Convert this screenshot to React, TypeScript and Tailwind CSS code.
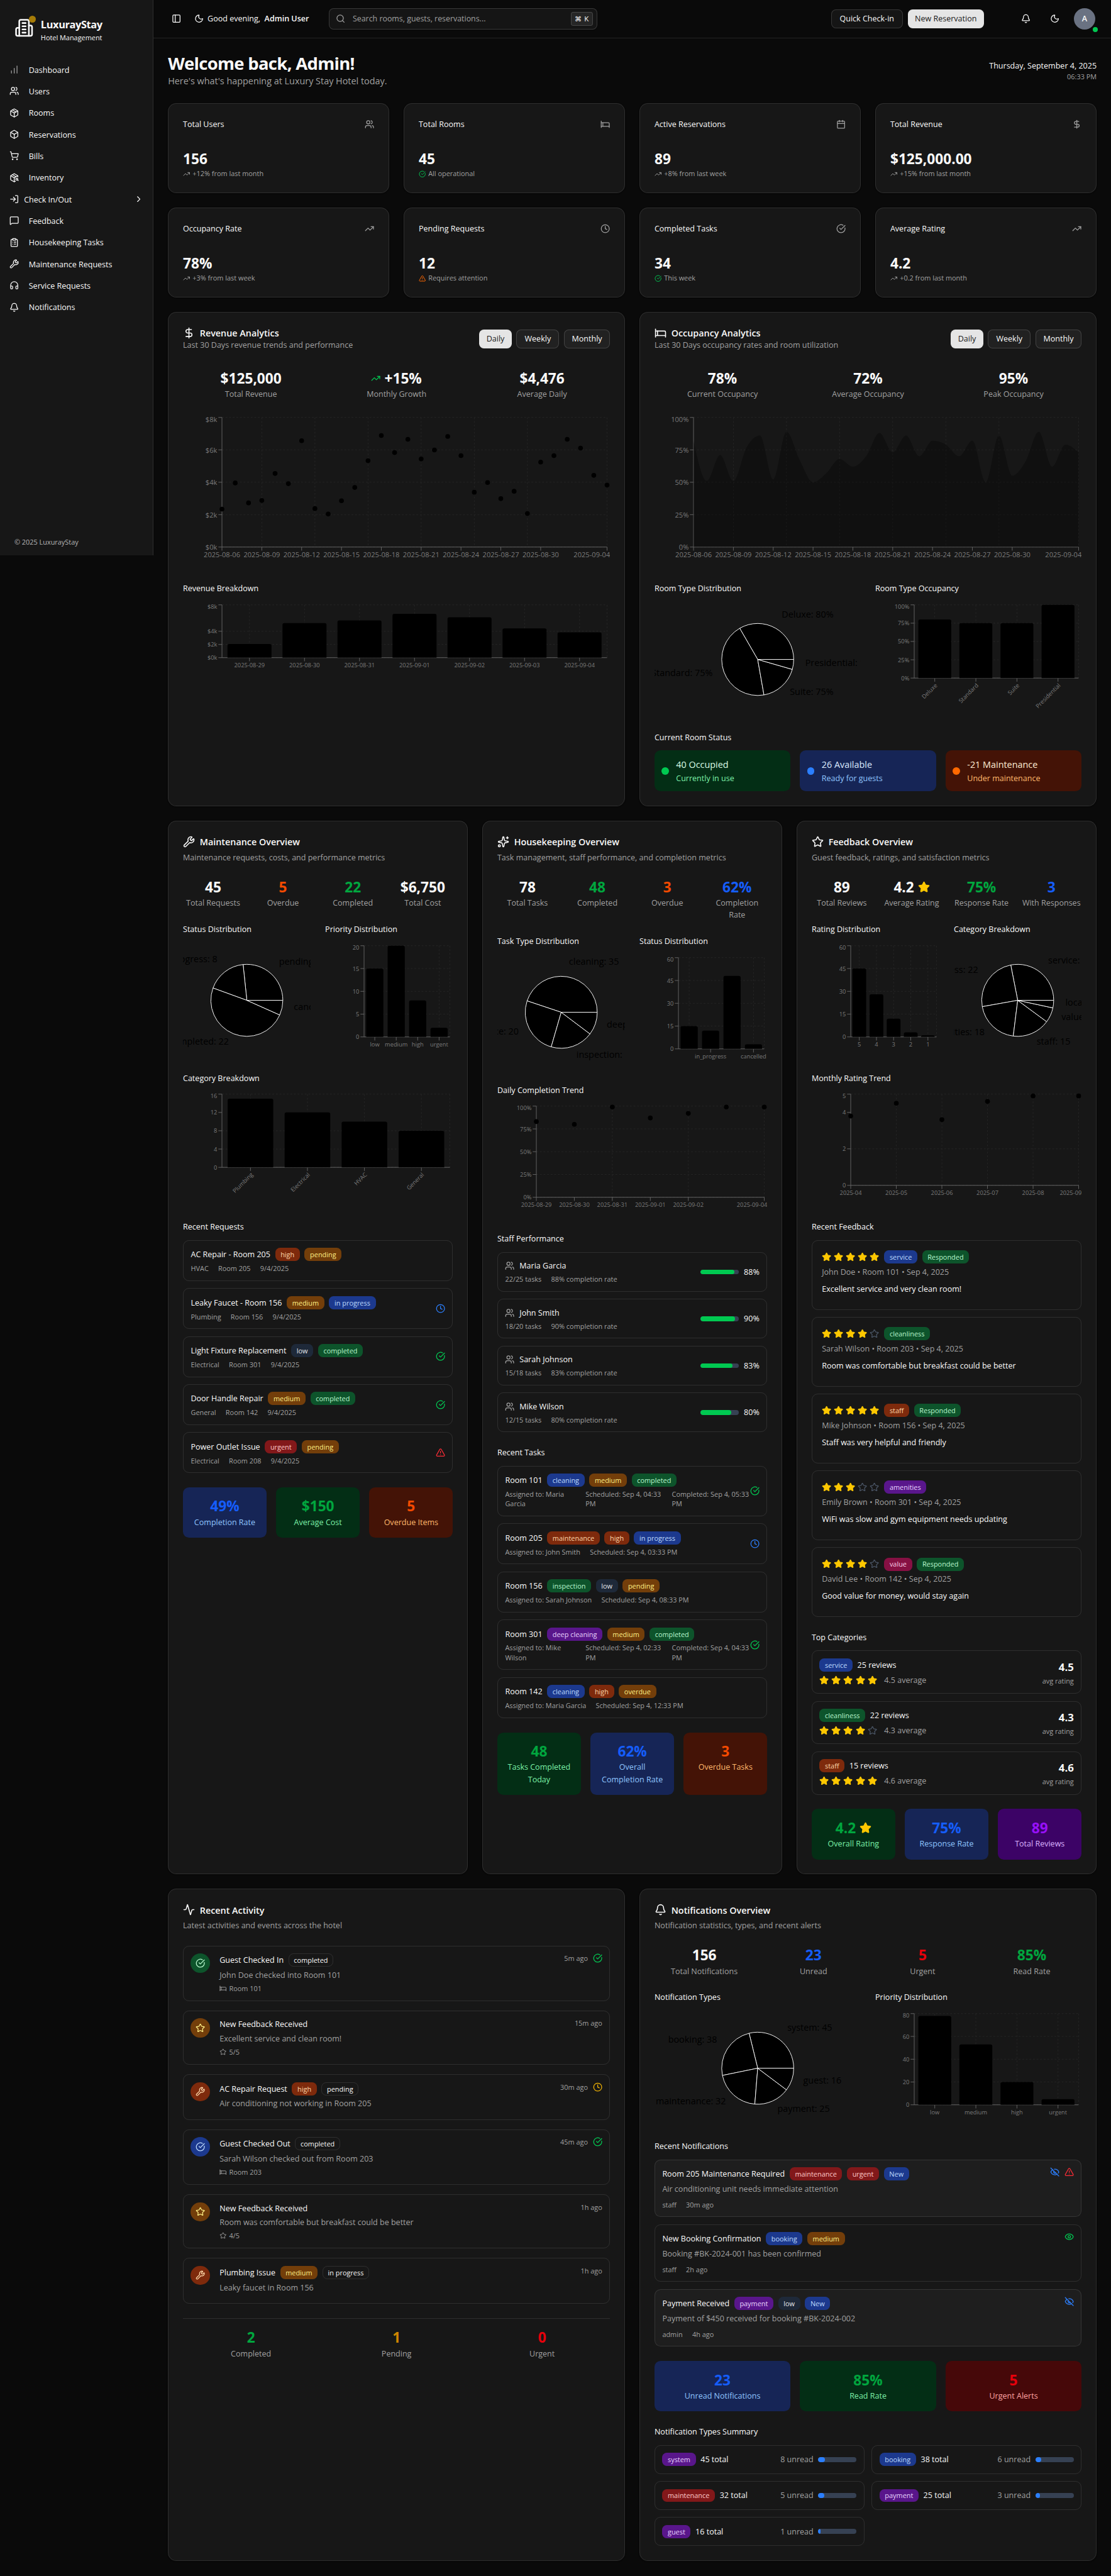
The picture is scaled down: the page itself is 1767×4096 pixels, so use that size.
import React from "react";
import {
  Activity,
  Bed,
  Bell,
  Box,
  Calendar,
  ChartNoAxesColumnIncreasing,
  ChevronRight,
  CircleCheckBig,
  ClipboardList,
  Clock,
  DollarSign,
  Eye,
  EyeOff,
  Headphones,
  LogIn,
  MessageSquare,
  Moon,
  Package,
  PackageSearch,
  PanelLeft,
  Search,
  ShoppingCart,
  Sparkles,
  Star,
  TrendingUp,
  TriangleAlert,
  Users,
  Wrench,
} from "lucide-react";

type Icon = React.ComponentType<{ className?: string; strokeWidth?: number }>;

/* ---------- type scale ---------- */

const T = {
  xs: "text-[11.45px] leading-4",
  sm: "text-[13.15px] leading-5",
  base: "text-[15.1px] leading-6",
  stat: "text-[23.8px] leading-8 font-bold",
};

/* ---------- badges ---------- */

const TONES: Record<string, string> = {
  orange: "border-transparent bg-orange-900 text-orange-200",
  yellow: "border-transparent bg-yellow-900 text-yellow-200",
  blue: "border-transparent bg-blue-900 text-blue-200",
  gray: "border-transparent bg-gray-800 text-gray-200",
  green: "border-transparent bg-green-900 text-green-200",
  red: "border-transparent bg-red-900 text-red-200",
  purple: "border-transparent bg-purple-900 text-purple-200",
  pink: "border-transparent bg-pink-900 text-pink-200",
  outline: "border-white/10 text-neutral-50",
};

type BadgeDef = [string, keyof typeof TONES];

function Badge({ def }: { def: BadgeDef }) {
  return (
    <span
      className={`inline-flex h-[22px] shrink-0 items-center rounded-lg border px-2 text-[11.45px] leading-4 whitespace-nowrap ${TONES[def[1]]}`}
    >
      {def[0]}
    </span>
  );
}

/* ---------- charts ---------- */

type Tick = { at: number; label?: string; end?: boolean; rotate?: boolean };

type PlotProps = {
  w: number;
  h: number;
  axisH?: number;
  max: number;
  yTicks: [number, string][];
  hGrid?: number[];
  xTicks: Tick[];
  vGrid: number[];
  font?: number;
  children: (box: { left: number; right: number; top: number; bottom: number; y: (v: number) => number }) => React.ReactNode;
};

function Plot({ w, h, axisH = 30, max, yTicks, hGrid, xTicks, vGrid, font = 9.75, children }: PlotProps) {
  const left = 65;
  const right = w - 5;
  const top = 5;
  const bottom = h - 5 - axisH;
  const y = (v: number) => bottom - (v / max) * (bottom - top);
  const x = (f: number) => left + f * (right - left);
  return (
    <svg width={w} height={h} viewBox={`0 0 ${w} ${h}`} className="block overflow-hidden" fontSize={font}>
      <g stroke="#262626" strokeDasharray="3 3">
        {(hGrid ?? yTicks.map((t) => t[0])).map((v) => (
          <line key={v} x1={left} x2={right} y1={y(v)} y2={y(v)} />
        ))}
        {vGrid.map((f) => (
          <line key={f} x1={x(f)} x2={x(f)} y1={top} y2={bottom} />
        ))}
      </g>
      <g stroke="#666">
        <line x1={left} x2={right} y1={bottom} y2={bottom} />
        <line x1={left} x2={left} y1={top} y2={bottom} />
        {yTicks.map(([v]) => (
          <line key={v} x1={left - 6} x2={left} y1={y(v)} y2={y(v)} />
        ))}
        {xTicks.map((t) => (
          <line key={t.at} x1={x(t.at)} x2={x(t.at)} y1={bottom} y2={bottom + 6} />
        ))}
      </g>
      {children({ left, right, top, bottom, y })}
      <g fill="#7a7a7a">
        {yTicks.map(([v, label]) => (
          <text key={v} x={left - 8} y={y(v) + (v === max ? font * 0.3 : 0)} dy="0.38em" textAnchor="end">
            {label}
          </text>
        ))}
        {xTicks.map((t) =>
          t.rotate ? (
            <text
              key={t.at}
              transform={`translate(${x(t.at)} ${bottom + 8}) rotate(-45)`}
              dy="0.71em"
              textAnchor="end"
            >
              {t.label}
            </text>
          ) : (
            <text key={t.at} x={t.end ? w : x(t.at)} y={bottom + 8} dy="0.8em" textAnchor={t.end ? "end" : "middle"}>
              {t.label}
            </text>
          ),
        )}
      </g>
    </svg>
  );
}

type BarsProps = Omit<PlotProps, "children" | "xTicks" | "vGrid"> & {
  values: number[];
  labels: (string | null)[];
  rotate?: boolean;
  grid?: number[];
};

function BarPlot({ values, labels, rotate, grid, ...rest }: BarsProps) {
  const n = values.length;
  const center = (i: number) => (i + 0.5) / n;
  const bars = grid ?? values.map((_, i) => i);
  return (
    <Plot
      {...rest}
      xTicks={labels.flatMap((label, i) => (label ? [{ at: center(i), label, rotate }] : []))}
      vGrid={[...bars.map(center), 1]}
    >
      {({ left, right, bottom, y }) => {
        const band = (right - left) / n;
        return values.map((v, i) => {
          const x0 = left + band * (i + 0.1);
          const x1 = x0 + band * 0.8;
          const t = y(v);
          const r = Math.min(3, bottom - t);
          return (
            <path
              key={i}
              d={`M${x0} ${bottom}V${t + r}Q${x0} ${t} ${x0 + r} ${t}H${x1 - r}Q${x1} ${t} ${x1} ${t + r}V${bottom}Z`}
              fill="#000"
            />
          );
        });
      }}
    </Plot>
  );
}

type DotsProps = Omit<PlotProps, "children"> & { values: number[] };

function DotPlot({ values, ...rest }: DotsProps) {
  return (
    <Plot {...rest}>
      {({ left, right, y }) =>
        values.map((v, i) => (
          <circle key={i} cx={left + ((right - left) * i) / (values.length - 1)} cy={y(v)} r={4} fill="#000" />
        ))
      }
    </Plot>
  );
}

function monotonePath(pts: [number, number][]) {
  const n = pts.length;
  const slope = (i: number) => (pts[i + 1][1] - pts[i][1]) / (pts[i + 1][0] - pts[i][0]);
  const m: number[] = [];
  for (let i = 1; i < n - 1; i++) {
    const s0 = slope(i - 1);
    const s1 = slope(i);
    const p = (s0 + s1) / 2;
    m[i] = (Math.sign(s0) + Math.sign(s1)) * Math.min(Math.abs(s0), Math.abs(s1), 0.5 * Math.abs(p)) || 0;
  }
  m[0] = (3 * slope(0) - m[1]) / 2;
  m[n - 1] = (3 * slope(n - 2) - m[n - 2]) / 2;
  let d = `M${pts[0][0]} ${pts[0][1]}`;
  for (let i = 0; i < n - 1; i++) {
    const dx = (pts[i + 1][0] - pts[i][0]) / 3;
    d += `C${pts[i][0] + dx} ${pts[i][1] + dx * m[i]} ${pts[i + 1][0] - dx} ${pts[i + 1][1] - dx * m[i + 1]} ${pts[i + 1][0]} ${pts[i + 1][1]}`;
  }
  return d;
}

function PieChart({ w, slices }: { w: number; slices: [number, string][] }) {
  const total = slices.reduce((a, s) => a + s[0], 0);
  const cx = w / 2;
  const cy = 96;
  const at = (deg: number, r: number): [number, number] => [
    cx + r * Math.cos((deg * Math.PI) / 180),
    cy - r * Math.sin((deg * Math.PI) / 180),
  ];
  let start = 0;
  return (
    <svg width={w} height={192} viewBox={`0 0 ${w} 192`} className="block overflow-hidden" fontSize={15.1}>
      {slices.map(([v, label]) => {
        const a0 = start;
        const a1 = start + (v / total) * 360;
        start = a1;
        const [x0, y0] = at(a0, 60);
        const [x1, y1] = at(a1, 60);
        const [lx, ly] = at((a0 + a1) / 2, 80);
        return (
          <g key={label}>
            <path
              d={`M${cx} ${cy}L${x0} ${y0}A60 60 0 ${a1 - a0 > 180 ? 1 : 0} 0 ${x1} ${y1}Z`}
              fill="#000"
              stroke="#fff"
              strokeWidth={1}
            />
            <text x={lx} y={ly} fill="#000" textAnchor={lx > cx ? "start" : "end"}>
              {label}
            </text>
          </g>
        );
      })}
    </svg>
  );
}

/* ---------- shared pieces ---------- */

function Card({ className = "", children }: { className?: string; children: React.ReactNode }) {
  return (
    <div className={`rounded-[14px] border border-white/10 bg-neutral-900 p-6 shadow-sm ${className}`}>{children}</div>
  );
}

function CardTitle({ icon: I, title }: { icon: Icon; title: string }) {
  return (
    <div className="flex h-5 items-center gap-2">
      <I className="h-5 w-5 text-neutral-50" />
      <span className="pt-px text-[15.05px] leading-4 font-semibold text-neutral-50">{title}</span>
    </div>
  );
}

function CardHead({ icon, title, text }: { icon: Icon; title: string; text: string }) {
  return (
    <div className="mb-6 flex flex-col gap-1.5">
      <CardTitle icon={icon} title={title} />
      <p className={`${T.sm} text-[#a1a1a1]`}>{text}</p>
    </div>
  );
}

function Section({ title, className = "", children }: { title: string; className?: string; children: React.ReactNode }) {
  return (
    <div className={className}>
      <h4 className="mb-[11px] text-[13.15px] leading-[21px] text-neutral-50">{title}</h4>
      {children}
    </div>
  );
}

type StatDef = { value: React.ReactNode; label: React.ReactNode; tone?: string };

function Stats({ items, cols }: { items: StatDef[]; cols: string }) {
  return (
    <div className={`grid gap-4 ${cols}`}>
      {items.map((s, i) => (
        <div key={i} className="text-center">
          <div className={`flex items-center justify-center gap-1.5 ${T.stat} ${s.tone ?? "text-neutral-50"}`}>
            {s.value}
          </div>
          <div className={`whitespace-nowrap text-[#a1a1a1] ${T.sm}`}>{s.label}</div>
        </div>
      ))}
    </div>
  );
}

const TILE: Record<string, [string, string, string]> = {
  blue: ["bg-blue-950", "text-blue-600", "text-blue-300"],
  green: ["bg-green-950", "text-green-600", "text-green-300"],
  orange: ["bg-orange-950", "text-orange-600", "text-orange-300"],
  purple: ["bg-purple-950", "text-purple-600", "text-purple-300"],
  red: ["bg-red-950", "text-red-600", "text-red-300"],
};

function Tiles({ items }: { items: [keyof typeof TILE, React.ReactNode, React.ReactNode][] }) {
  return (
    <div className="grid grid-cols-3 gap-4">
      {items.map(([tone, value, label], i) => (
        <div key={i} className={`rounded-[10px] p-4 text-center ${TILE[tone][0]}`}>
          <div className={`flex items-center justify-center gap-1.5 ${T.stat} ${TILE[tone][1]}`}>{value}</div>
          <div className={`whitespace-nowrap ${T.sm} ${TILE[tone][2]}`}>{label}</div>
        </div>
      ))}
    </div>
  );
}

function StatusIcon({ kind }: { kind: "clock" | "check" | "alert" | "pending" | "hidden" | "seen" }) {
  if (kind === "clock") return <Clock className="h-4 w-4 shrink-0 text-blue-500" />;
  if (kind === "pending") return <Clock className="h-4 w-4 shrink-0 text-yellow-500" />;
  if (kind === "check") return <CircleCheckBig className="h-4 w-4 shrink-0 text-green-500" />;
  if (kind === "alert") return <TriangleAlert className="h-4 w-4 shrink-0 text-red-500" />;
  if (kind === "hidden") return <EyeOff className="h-4 w-4 shrink-0 text-blue-500" />;
  return <Eye className="h-4 w-4 shrink-0 text-green-500" />;
}

function Stars({ n }: { n: number }) {
  return (
    <div className="flex gap-1">
      {[1, 2, 3, 4, 5].map((i) => (
        <Star key={i} className={i <= n ? "h-4 w-4 fill-yellow-400 text-yellow-400" : "h-4 w-4 text-gray-600"} />
      ))}
    </div>
  );
}

/* ---------- sidebar ---------- */

const NAV: [string, Icon][] = [
  ["Dashboard", ChartNoAxesColumnIncreasing],
  ["Users", Users],
  ["Rooms", Package],
  ["Reservations", Box],
  ["Bills", ShoppingCart],
  ["Inventory", PackageSearch],
  ["Check In/Out", LogIn],
  ["Feedback", MessageSquare],
  ["Housekeeping Tasks", ClipboardList],
  ["Maintenance Requests", Wrench],
  ["Service Requests", Headphones],
  ["Notifications", Bell],
];

function Sidebar() {
  return (
    <aside className="flex h-[926px] w-64 shrink-0 flex-col border-r border-white/10 bg-neutral-900 text-neutral-50">
      <div className="flex h-[100px] items-start gap-3 pt-[30px] pl-6">
        <div className="relative h-8 w-8">
          <svg viewBox="0 0 24 24" className="h-8 w-8" fill="none" stroke="currentColor" strokeWidth="2" strokeLinecap="round" strokeLinejoin="round">
            <path d="M6 22V4a2 2 0 0 1 2-2h8a2 2 0 0 1 2 2v18Z" />
            <path d="M6 12H4a2 2 0 0 0-2 2v6a2 2 0 0 0 2 2h2" />
            <path d="M18 9h2a2 2 0 0 1 2 2v9a2 2 0 0 1-2 2h-2" />
            <path d="M10 6h4M10 10h4M10 14h4M10 18h4" />
          </svg>
          <span className="absolute -top-1 -right-1 h-3 w-3 rounded-full bg-[#a67c08]" />
        </div>
        <div>
          <div className="text-[17.2px] leading-5 font-bold tracking-tight">LuxurayStay</div>
          <div className="mt-1 text-[11.45px] leading-4">Hotel Management</div>
        </div>
      </div>
      <nav className="flex flex-col gap-1 px-2">
        {NAV.map(([label, I]) => {
          const sub = label === "Check In/Out";
          return (
            <div key={label} className={`flex h-8 items-center px-2 ${T.sm} ${sub ? "gap-2" : "gap-4"}`}>
              <I className={label === "Dashboard" ? "h-4 w-4 text-neutral-400" : "h-4 w-4"} />
              <span className="pt-px">{label}</span>
              {sub && <ChevronRight className="ml-auto h-4 w-4" />}
            </div>
          );
        })}
      </nav>
      <div className={`mt-auto mb-[15px] pl-6 text-neutral-50/70 ${T.xs}`}>© 2025 LuxurayStay</div>
    </aside>
  );
}

/* ---------- header ---------- */

function Header() {
  return (
    <header className={`flex h-16 items-center border-b border-white/10 px-6 text-neutral-50 ${T.sm}`}>
      <div className="flex h-7 w-7 items-center justify-center">
        <PanelLeft className="h-4 w-4" />
      </div>
      <div className="ml-4 flex w-48 items-center gap-1.5 whitespace-nowrap">
        <Moon className="h-4 w-4" />
        <span>
          Good evening,&nbsp; <span className="font-semibold">Admin User</span>
        </span>
      </div>
      <div className="ml-8 flex h-9 w-[448px] items-center rounded-lg border border-white/15 bg-[#151515] pr-[7px] pl-[11px] shadow-xs">
        <Search className="h-4 w-4 text-[#a1a1a1]" />
        <span className="ml-3 text-[13px] text-[#a1a1a1]">Search rooms, guests, reservations...</span>
        <span className="ml-auto flex h-6 w-9 items-center justify-center gap-1 rounded border border-white/15 bg-neutral-800 text-xs">
          <span>⌘</span>
          <span>K</span>
        </span>
      </div>
      <div className="ml-auto flex items-center">
        <span className="flex h-8 w-[120px] items-center justify-center rounded-lg border border-white/15 bg-[#151515]">
          Quick Check-in
        </span>
        <span className="ml-2 flex h-8 w-[127px] items-center justify-center rounded-lg bg-neutral-200 text-neutral-900">
          New Reservation
        </span>
        <span className="ml-[52px] flex h-9 w-9 items-center justify-center">
          <Bell className="h-4 w-4" />
        </span>
        <span className="ml-3 flex h-9 w-9 items-center justify-center">
          <Moon className="h-4 w-4" />
        </span>
        <span className="relative mr-0.5 ml-3.5 flex h-9 w-9 items-center justify-center rounded-full bg-gray-500 font-semibold">
          A
          <span className="absolute -right-1 -bottom-1 h-2 w-2 rounded-full bg-green-500" />
        </span>
      </div>
    </header>
  );
}

/* ---------- metric cards ---------- */

type Metric = { title: string; icon: Icon; value: string; note: string; mark: Icon; markTone: string };

const METRICS: Metric[] = [
  { title: "Total Users", icon: Users, value: "156", note: "+12% from last month", mark: TrendingUp, markTone: "" },
  { title: "Total Rooms", icon: Bed, value: "45", note: "All operational", mark: CircleCheckBig, markTone: "text-green-500" },
  { title: "Active Reservations", icon: Calendar, value: "89", note: "+8% from last week", mark: TrendingUp, markTone: "" },
  { title: "Total Revenue", icon: DollarSign, value: "$125,000.00", note: "+15% from last month", mark: TrendingUp, markTone: "" },
  { title: "Occupancy Rate", icon: TrendingUp, value: "78%", note: "+3% from last week", mark: TrendingUp, markTone: "" },
  { title: "Pending Requests", icon: Clock, value: "12", note: "Requires attention", mark: TriangleAlert, markTone: "text-orange-500" },
  { title: "Completed Tasks", icon: CircleCheckBig, value: "34", note: "This week", mark: CircleCheckBig, markTone: "text-green-500" },
  { title: "Average Rating", icon: TrendingUp, value: "4.2", note: "+0.2 from last month", mark: TrendingUp, markTone: "" },
];

function MetricCard({ m }: { m: Metric }) {
  return (
    <Card className="h-[150px]">
      <div className="mb-8 flex h-5 items-center justify-between">
        <span className={`pt-px text-neutral-50 ${T.sm}`}>{m.title}</span>
        <m.icon className="h-4 w-4 text-[#a1a1a1]" />
      </div>
      <div className={`text-neutral-50 ${T.stat}`}>{m.value}</div>
      <p className={`text-[#a1a1a1] ${T.xs}`}>
        <m.mark className={`mr-1 inline h-3 w-3 ${m.markTone}`} />
        {m.note}
      </p>
    </Card>
  );
}

/* ---------- analytics ---------- */

function RangeButtons() {
  return (
    <div className={`flex gap-2 text-neutral-50 ${T.sm}`}>
      <span className="flex h-8 w-[54px] items-center justify-center rounded-lg bg-neutral-200 text-neutral-900">Daily</span>
      <span className="flex h-8 w-[71px] items-center justify-center rounded-lg border border-white/15 bg-[#212121]">Weekly</span>
      <span className="flex h-8 w-[77px] items-center justify-center rounded-lg border border-white/15 bg-[#212121]">Monthly</span>
    </div>
  );
}

function AnalyticsHead({ icon, title, text }: { icon: Icon; title: string; text: string }) {
  return (
    <div className="mb-[30px] flex h-10 items-center justify-between">
      <div>
        <CardTitle icon={icon} title={title} />
        <p className={`${T.sm} text-[#a1a1a1]`}>{text}</p>
      </div>
      <RangeButtons />
    </div>
  );
}

const DAY_TICKS: Tick[] = [
  ["2025-08-06", 0],
  ["2025-08-09", 3],
  ["2025-08-12", 6],
  ["2025-08-15", 9],
  ["2025-08-18", 12],
  ["2025-08-21", 15],
  ["2025-08-24", 18],
  ["2025-08-27", 21],
  ["2025-08-30", 24],
  ["2025-09-04", 29],
].map(([label, d]) => ({ at: (d as number) / 29, label: label as string, end: d === 29 }));

const DAY_GRID = [3, 7, 11, 15, 19, 23, 29].map((d) => d / 29);

const REVENUE = [
  2344, 3956, 2725, 2872, 4542, 3912, 6564, 2374, 2037, 2857, 3678, 5333, 6886, 5832, 6652, 5436, 5993, 6828, 5641, 3385,
  3985, 2989, 3443, 2066, 5245, 5641, 6652, 6110, 4425, 3824,
];

const OCCUPANCY = [
  82, 51, 71, 51, 77, 86, 52, 89, 67, 50, 57, 68, 62, 70, 88, 73, 86, 70, 82, 79, 70, 82, 50, 86, 55, 66, 89, 62, 79, 73,
];

function RevenueCard() {
  return (
    <Card>
      <AnalyticsHead icon={DollarSign} title="Revenue Analytics" text="Last 30 Days revenue trends and performance" />
      <div className="flex flex-col gap-6">
        <Stats
          cols="grid-cols-3"
          items={[
            { value: "$125,000", label: "Total Revenue" },
            { value: <><TrendingUp className="h-4 w-4 text-green-500" />+15%</>, label: "Monthly Growth" },
            { value: "$4,476", label: "Average Daily" },
          ]}
        />
        <DotPlot
          w={712}
          h={256}
          max={8000}
          font={11.65}
          yTicks={[[0, "$0k"], [2000, "$2k"], [4000, "$4k"], [6000, "$6k"], [8000, "$8k"]]}
          xTicks={DAY_TICKS}
          vGrid={DAY_GRID}
          values={REVENUE}
        />
        <Section title="Revenue Breakdown">
          <BarPlot
            w={712}
            h={128}
            max={8000}
            yTicks={[[0, "$0k"], [2000, "$2k"], [4000, "$4k"], [8000, "$8k"]]}
            values={REVENUE.slice(-7)}
            labels={["2025-08-29", "2025-08-30", "2025-08-31", "2025-09-01", "2025-09-02", "2025-09-03", "2025-09-04"]}
          />
        </Section>
      </div>
    </Card>
  );
}

const PERCENT_TICKS: [number, string][] = [
  [0, "0%"],
  [25, "25%"],
  [50, "50%"],
  [75, "75%"],
  [100, "100%"],
];

const ROOM_STATUS: [string, string, string, string, string, string][] = [
  ["40 Occupied", "Currently in use", "bg-green-950", "bg-green-500", "text-green-100", "text-green-300"],
  ["26 Available", "Ready for guests", "bg-blue-950", "bg-blue-500", "text-blue-100", "text-blue-300"],
  ["-21 Maintenance", "Under maintenance", "bg-orange-950", "bg-orange-500", "text-orange-100", "text-orange-300"],
];

function OccupancyCard() {
  return (
    <Card>
      <AnalyticsHead icon={Bed} title="Occupancy Analytics" text="Last 30 Days occupancy rates and room utilization" />
      <div className="flex flex-col gap-6">
        <Stats
          cols="grid-cols-3"
          items={[
            { value: "78%", label: "Current Occupancy" },
            { value: "72%", label: "Average Occupancy" },
            { value: "95%", label: "Peak Occupancy" },
          ]}
        />
        <Plot w={712} h={256} max={100} font={11.65} yTicks={PERCENT_TICKS} xTicks={DAY_TICKS} vGrid={DAY_GRID}>
          {({ left, right, bottom, y }) => {
            const pts = OCCUPANCY.map((v, i): [number, number] => [left + ((right - left) * i) / 29, y(v)]);
            return <path d={`${monotonePath(pts)}V${bottom}H${left}Z`} fill="#000" fillOpacity={0.3} />;
          }}
        </Plot>
        <div className="grid grid-cols-2 gap-6">
          <Section title="Room Type Distribution">
            <PieChart w={344} slices={[[15, "Deluxe: 80%"], [20, "Standard: 75%"], [8, "Suite: 75%"], [2, "Presidential: 100%"]]} />
          </Section>
          <Section title="Room Type Occupancy">
            <BarPlot
              w={344}
              h={192}
              axisH={60}
              max={100}
              rotate
              yTicks={PERCENT_TICKS}
              values={[80, 75, 75, 100]}
              labels={["Deluxe", "Standard", "Suite", "Presidential"]}
            />
          </Section>
        </div>
        <Section title="Current Room Status">
          <div className="grid grid-cols-3 gap-4">
            {ROOM_STATUS.map(([title, sub, bg, dot, c1, c2]) => (
              <div key={title} className={`flex items-center gap-3 rounded-[10px] p-3 ${bg}`}>
                <span className={`h-3 w-3 rounded-full ${dot}`} />
                <div>
                  <div className={`${T.base} ${c1}`}>{title}</div>
                  <div className={`${T.sm} ${c2}`}>{sub}</div>
                </div>
              </div>
            ))}
          </div>
        </Section>
      </div>
    </Card>
  );
}

/* ---------- maintenance ---------- */

const REQUESTS: { title: string; badges: BadgeDef[]; meta: string[]; icon?: "clock" | "check" | "alert" }[] = [
  { title: "AC Repair - Room 205", badges: [["high", "orange"], ["pending", "yellow"]], meta: ["HVAC", "Room 205", "9/4/2025"] },
  { title: "Leaky Faucet - Room 156", badges: [["medium", "yellow"], ["in progress", "blue"]], meta: ["Plumbing", "Room 156", "9/4/2025"], icon: "clock" },
  { title: "Light Fixture Replacement", badges: [["low", "gray"], ["completed", "green"]], meta: ["Electrical", "Room 301", "9/4/2025"], icon: "check" },
  { title: "Door Handle Repair", badges: [["medium", "yellow"], ["completed", "green"]], meta: ["General", "Room 142", "9/4/2025"], icon: "check" },
  { title: "Power Outlet Issue", badges: [["urgent", "red"], ["pending", "yellow"]], meta: ["Electrical", "Room 208", "9/4/2025"], icon: "alert" },
];

function MaintenanceCard() {
  return (
    <Card>
      <CardHead icon={Wrench} title="Maintenance Overview" text="Maintenance requests, costs, and performance metrics" />
      <div className="flex flex-col gap-6">
        <Stats
          cols="grid-cols-4"
          items={[
            { value: "45", label: "Total Requests" },
            { value: "5", label: "Overdue", tone: "text-orange-600" },
            { value: "22", label: "Completed", tone: "text-green-600" },
            { value: "$6,750", label: "Total Cost" },
          ]}
        />
        <div className="grid grid-cols-2 gap-6">
          <Section title="Status Distribution">
            <PieChart w={213} slices={[[12, "pending: 12"], [8, "in_progress: 8"], [22, "completed: 22"], [3, "cancelled: 3"]]} />
          </Section>
          <Section title="Priority Distribution">
            <BarPlot
              w={213}
              h={192}
              max={20}
              yTicks={[[0, "0"], [5, "5"], [10, "10"], [15, "15"], [20, "20"]]}
              values={[15, 20, 8, 2]}
              grid={[3]}
              labels={["low", "medium", "high", "urgent"]}
            />
          </Section>
        </div>
        <Section title="Category Breakdown">
          <BarPlot
            w={450}
            h={192}
            axisH={60}
            max={16}
            rotate
            yTicks={[[0, "0"], [4, "4"], [8, "8"], [12, "12"], [16, "16"]]}
            hGrid={[0, 4, 8, 16]}
            values={[15, 12, 10, 8]}
            labels={["Plumbing", "Electrical", "HVAC", "General"]}
          />
        </Section>
        <Section title="Recent Requests">
          <div className="flex flex-col gap-3">
            {REQUESTS.map((r) => (
              <div key={r.title} className="flex items-center justify-between rounded-[10px] border border-white/10 p-3">
                <div>
                  <div className="mb-1 flex items-center gap-2">
                    <span className={`text-neutral-50 ${T.sm}`}>{r.title}</span>
                    {r.badges.map((b) => <Badge key={b[0]} def={b} />)}
                  </div>
                  <div className={`flex gap-4 text-[#a1a1a1] ${T.xs}`}>
                    {r.meta.map((t) => <span key={t}>{t}</span>)}
                  </div>
                </div>
                {r.icon && <StatusIcon kind={r.icon} />}
              </div>
            ))}
          </div>
        </Section>
        <Tiles items={[["blue", "49%", "Completion Rate"], ["green", "$150", "Average Cost"], ["orange", "5", "Overdue Items"]]} />
      </div>
    </Card>
  );
}

/* ---------- housekeeping ---------- */

const STAFF: [string, string, number][] = [
  ["Maria Garcia", "22/25 tasks", 88],
  ["John Smith", "18/20 tasks", 90],
  ["Sarah Johnson", "15/18 tasks", 83],
  ["Mike Wilson", "12/15 tasks", 80],
];

const TASKS: { room: string; badges: BadgeDef[]; meta: [string, string?][]; icon?: "clock" | "check" }[] = [
  {
    room: "Room 101",
    badges: [["cleaning", "blue"], ["medium", "yellow"], ["completed", "green"]],
    meta: [["Assigned to: Maria", "Garcia"], ["Scheduled: Sep 4, 04:33", "PM"], ["Completed: Sep 4, 05:33", "PM"]],
    icon: "check",
  },
  {
    room: "Room 205",
    badges: [["maintenance", "orange"], ["high", "orange"], ["in progress", "blue"]],
    meta: [["Assigned to: John Smith"], ["Scheduled: Sep 4, 03:33 PM"]],
    icon: "clock",
  },
  {
    room: "Room 156",
    badges: [["inspection", "green"], ["low", "gray"], ["pending", "yellow"]],
    meta: [["Assigned to: Sarah Johnson"], ["Scheduled: Sep 4, 08:33 PM"]],
  },
  {
    room: "Room 301",
    badges: [["deep cleaning", "purple"], ["medium", "yellow"], ["completed", "green"]],
    meta: [["Assigned to: Mike", "Wilson"], ["Scheduled: Sep 4, 02:33", "PM"], ["Completed: Sep 4, 04:33", "PM"]],
    icon: "check",
  },
  {
    room: "Room 142",
    badges: [["cleaning", "blue"], ["high", "orange"], ["overdue", "yellow"]],
    meta: [["Assigned to: Maria Garcia"], ["Scheduled: Sep 4, 12:33 PM"]],
  },
];

function HousekeepingCard() {
  return (
    <Card>
      <CardHead icon={Sparkles} title="Housekeeping Overview" text="Task management, staff performance, and completion metrics" />
      <div className="flex flex-col gap-6">
        <Stats
          cols="grid-cols-4"
          items={[
            { value: "78", label: "Total Tasks" },
            { value: "48", label: "Completed", tone: "text-green-600" },
            { value: "3", label: "Overdue", tone: "text-orange-600" },
            { value: "62%", label: <>Completion<br />Rate</>, tone: "text-blue-600" },
          ]}
        />
        <div className="grid grid-cols-2 gap-6">
          <Section title="Task Type Distribution">
            <PieChart w={213} slices={[[35, "cleaning: 35"], [20, "maintenance: 20"], [15, "inspection: 15"], [8, "deep_cleaning: 8"]]} />
          </Section>
          <Section title="Status Distribution">
            <BarPlot
              w={213}
              h={192}
              max={60}
              yTicks={[[0, "0"], [15, "15"], [30, "30"], [45, "45"], [60, "60"]]}
              values={[15, 12, 48, 3]}
              grid={[0, 3]}
              labels={[null, "in_progress", null, "cancelled"]}
            />
          </Section>
        </div>
        <Section title="Daily Completion Trend">
          <DotPlot
            w={450}
            h={192}
            max={100}
            yTicks={PERCENT_TICKS}
            xTicks={["2025-08-29", "2025-08-30", "2025-08-31", "2025-09-01", "2025-09-02", "", "2025-09-04"].flatMap((label, i) =>
              label ? [{ at: i / 6, label, end: i === 6 }] : [],
            )}
            vGrid={[2 / 6, 4 / 6, 1]}
            values={[83, 80, 99, 87, 92, 99, 99]}
          />
        </Section>
        <Section title="Staff Performance">
          <div className="flex flex-col gap-3">
            {STAFF.map(([name, tasks, rate]) => (
              <div key={name} className="flex items-center justify-between rounded-[10px] border border-white/10 p-3">
                <div>
                  <div className="mb-1 flex items-center gap-2">
                    <Users className="h-4 w-4 text-[#a1a1a1]" />
                    <span className={`text-neutral-50 ${T.sm}`}>{name}</span>
                  </div>
                  <div className={`flex gap-4 text-[#a1a1a1] ${T.xs}`}>
                    <span>{tasks}</span>
                    <span>{rate}% completion rate</span>
                  </div>
                </div>
                <div className="flex items-center gap-2">
                  <div className="h-2 w-16 overflow-hidden rounded-full bg-gray-700">
                    <div className="h-2 rounded-full bg-green-500" style={{ width: `${rate}%` }} />
                  </div>
                  <span className={`text-neutral-50 ${T.sm}`}>{rate}%</span>
                </div>
              </div>
            ))}
          </div>
        </Section>
        <Section title="Recent Tasks">
          <div className="flex flex-col gap-3">
            {TASKS.map((t) => (
              <div key={t.room} className="flex items-center justify-between rounded-[10px] border border-white/10 p-3">
                <div className="min-w-0">
                  <div className="mb-1 flex items-center gap-2">
                    <span className={`text-neutral-50 ${T.sm}`}>{t.room}</span>
                    {t.badges.map((b) => <Badge key={b[0]} def={b} />)}
                  </div>
                  <div className={`flex whitespace-nowrap text-[#a1a1a1] ${T.xs} ${t.meta.length === 3 ? "" : "gap-4"}`}>
                    {t.meta.map(([a, b], i) => (
                      <span key={a} className={b ? (i === 0 ? "w-[134px]" : i === 1 ? "w-36" : "w-[130px]") : ""}>
                        {a}
                        {b && <><br />{b}</>}
                      </span>
                    ))}
                  </div>
                </div>
                {t.icon && <StatusIcon kind={t.icon} />}
              </div>
            ))}
          </div>
        </Section>
        <Tiles
          items={[
            ["green", "48", <>Tasks Completed<br />Today</>],
            ["blue", "62%", <>Overall<br />Completion Rate</>],
            ["orange", "3", "Overdue Tasks"],
          ]}
        />
      </div>
    </Card>
  );
}

/* ---------- feedback ---------- */

const FEEDBACK: { stars: number; badges: BadgeDef[]; by: string; text: string }[] = [
  { stars: 5, badges: [["service", "blue"], ["Responded", "green"]], by: "John Doe • Room 101 • Sep 4, 2025", text: "Excellent service and very clean room!" },
  { stars: 4, badges: [["cleanliness", "green"]], by: "Sarah Wilson • Room 203 • Sep 4, 2025", text: "Room was comfortable but breakfast could be better" },
  { stars: 5, badges: [["staff", "orange"], ["Responded", "green"]], by: "Mike Johnson • Room 156 • Sep 4, 2025", text: "Staff was very helpful and friendly" },
  { stars: 3, badges: [["amenities", "purple"]], by: "Emily Brown • Room 301 • Sep 4, 2025", text: "WiFi was slow and gym equipment needs updating" },
  { stars: 4, badges: [["value", "pink"], ["Responded", "green"]], by: "David Lee • Room 142 • Sep 4, 2025", text: "Good value for money, would stay again" },
];

const CATEGORIES: { badge: BadgeDef; count: number; stars: number; avg: string }[] = [
  { badge: ["service", "blue"], count: 25, stars: 5, avg: "4.5" },
  { badge: ["cleanliness", "green"], count: 22, stars: 4, avg: "4.3" },
  { badge: ["staff", "orange"], count: 15, stars: 5, avg: "4.6" },
];

function FeedbackCard() {
  return (
    <Card>
      <CardHead icon={Star} title="Feedback Overview" text="Guest feedback, ratings, and satisfaction metrics" />
      <div className="flex flex-col gap-6">
        <Stats
          cols="grid-cols-4"
          items={[
            { value: "89", label: "Total Reviews" },
            { value: <>4.2<Star className="h-5 w-5 fill-yellow-400 text-yellow-400" /></>, label: "Average Rating" },
            { value: "75%", label: "Response Rate", tone: "text-green-600" },
            { value: "3", label: "With Responses", tone: "text-blue-600" },
          ]}
        />
        <div className="grid grid-cols-2 gap-6">
          <Section title="Rating Distribution">
            <BarPlot
              w={213}
              h={192}
              max={60}
              yTicks={[[0, "0"], [15, "15"], [30, "30"], [45, "45"], [60, "60"]]}
              values={[45, 28, 12, 3, 1]}
              labels={["5", "4", "3", "2", "1"]}
            />
          </Section>
          <Section title="Category Breakdown">
            <PieChart
              w={213}
              slices={[[25, "service: 25"], [22, "cleanliness: 22"], [18, "amenities: 18"], [15, "staff: 15"], [6, "value: 6"], [3, "location: 3"]]}
            />
          </Section>
        </div>
        <Section title="Monthly Rating Trend">
          <DotPlot
            w={450}
            h={192}
            max={5}
            yTicks={[[0, "0"], [2, "2"], [4, "4"], [5, "5"]]}
            hGrid={[0, 2, 5]}
            xTicks={["2025-04", "2025-05", "2025-06", "2025-07", "2025-08", "2025-09"].map((label, i) => ({ at: i / 5, label, end: i === 5 }))}
            vGrid={[0.2, 0.4, 0.6, 0.8, 1]}
            values={[3.8, 4.5, 3.6, 4.6, 4.9, 4.9]}
          />
        </Section>
        <Section title="Recent Feedback">
          <div className="flex flex-col gap-3">
            {FEEDBACK.map((f) => (
              <div key={f.by} className="h-[116px] rounded-[10px] border border-white/10 p-4">
                <div className="mb-1 flex items-center gap-2">
                  <Stars n={f.stars} />
                  {f.badges.map((b) => <Badge key={b[0]} def={b} />)}
                </div>
                <div className={`text-[#a1a1a1] ${T.sm}`}>{f.by}</div>
                <p className={`mt-2 text-neutral-50 ${T.sm}`}>{f.text}</p>
              </div>
            ))}
          </div>
        </Section>
        <Section title="Top Categories">
          <div className="flex flex-col gap-3">
            {CATEGORIES.map((c) => (
              <div key={c.avg} className="flex items-center justify-between rounded-[10px] border border-white/10 p-3">
                <div>
                  <div className="mb-1 flex items-center gap-2">
                    <Badge def={c.badge} />
                    <span className={`text-neutral-50 ${T.sm}`}>{c.count} reviews</span>
                  </div>
                  <div className="flex items-center gap-3">
                    <Stars n={c.stars} />
                    <span className={`text-[#a1a1a1] ${T.sm}`}>{c.avg} average</span>
                  </div>
                </div>
                <div className="text-right">
                  <div className="text-[17.6px] leading-7 font-bold text-neutral-50">{c.avg}</div>
                  <div className={`text-[#a1a1a1] ${T.xs}`}>avg rating</div>
                </div>
              </div>
            ))}
          </div>
        </Section>
        <Tiles
          items={[
            ["green", <>4.2<Star className="h-5 w-5 fill-yellow-400 text-yellow-400" /></>, "Overall Rating"],
            ["blue", "75%", "Response Rate"],
            ["purple", "89", "Total Reviews"],
          ]}
        />
      </div>
    </Card>
  );
}

/* ---------- recent activity ---------- */

const CIRCLES: Record<string, string> = {
  green: "bg-green-900 text-green-200",
  yellow: "bg-yellow-900 text-yellow-200",
  orange: "bg-orange-900 text-orange-200",
  blue: "bg-blue-900 text-blue-200",
};

type ActivityDef = {
  icon: Icon;
  tone: keyof typeof CIRCLES;
  title: string;
  badges: BadgeDef[];
  text: string;
  meta?: [Icon, string];
  ago: string;
  status?: "check" | "pending";
};

const ACTIVITIES: ActivityDef[] = [
  { icon: CircleCheckBig, tone: "green", title: "Guest Checked In", badges: [["completed", "outline"]], text: "John Doe checked into Room 101", meta: [Bed, "Room 101"], ago: "5m ago", status: "check" },
  { icon: Star, tone: "yellow", title: "New Feedback Received", badges: [], text: "Excellent service and clean room!", meta: [Star, "5/5"], ago: "15m ago" },
  { icon: Wrench, tone: "orange", title: "AC Repair Request", badges: [["high", "orange"], ["pending", "outline"]], text: "Air conditioning not working in Room 205", ago: "30m ago", status: "pending" },
  { icon: CircleCheckBig, tone: "blue", title: "Guest Checked Out", badges: [["completed", "outline"]], text: "Sarah Wilson checked out from Room 203", meta: [Bed, "Room 203"], ago: "45m ago", status: "check" },
  { icon: Star, tone: "yellow", title: "New Feedback Received", badges: [], text: "Room was comfortable but breakfast could be better", meta: [Star, "4/5"], ago: "1h ago" },
  { icon: Wrench, tone: "orange", title: "Plumbing Issue", badges: [["medium", "yellow"], ["in progress", "outline"]], text: "Leaky faucet in Room 156", ago: "1h ago" },
];

function ActivityCard() {
  return (
    <Card>
      <CardHead icon={Activity} title="Recent Activity" text="Latest activities and events across the hotel" />
      <div className="flex flex-col gap-4">
        {ACTIVITIES.map((a, i) => {
          const MetaIcon = a.meta?.[0];
          return (
            <div key={i} className="flex items-start gap-4 rounded-[10px] border border-white/10 p-3">
              <div className={`flex h-8 w-8 items-center justify-center rounded-full ${CIRCLES[a.tone]}`}>
                <a.icon className="h-4 w-4" />
              </div>
              <div className="flex-1">
                <div className="mb-1 flex items-center gap-2">
                  <span className={`text-neutral-50 ${T.sm}`}>{a.title}</span>
                  {a.badges.map((b) => <Badge key={b[0]} def={b} />)}
                </div>
                <p className={`mb-1 text-[#a1a1a1] ${T.sm}`}>{a.text}</p>
                {a.meta && MetaIcon && (
                  <div className={`flex items-center gap-1 text-[#a1a1a1] ${T.xs}`}>
                    <MetaIcon className="h-3 w-3" />
                    <span>{a.meta[1]}</span>
                  </div>
                )}
              </div>
              <div className={`flex items-center gap-2 text-[#a1a1a1] ${T.xs}`}>
                <span>{a.ago}</span>
                {a.status && <StatusIcon kind={a.status} />}
              </div>
            </div>
          );
        })}
      </div>
      <div className="mt-6 border-t border-white/10 pt-4">
        <Stats
          cols="grid-cols-3"
          items={[
            { value: "2", label: "Completed", tone: "text-green-600" },
            { value: "1", label: "Pending", tone: "text-yellow-600" },
            { value: "0", label: "Urgent", tone: "text-red-600" },
          ]}
        />
      </div>
    </Card>
  );
}

/* ---------- notifications ---------- */

const NOTICES: { title: string; badges: BadgeDef[]; text: string; who: string; ago: string; unread: boolean; icons: ("hidden" | "alert" | "seen")[] }[] = [
  { title: "Room 205 Maintenance Required", badges: [["maintenance", "red"], ["urgent", "red"], ["New", "blue"]], text: "Air conditioning unit needs immediate attention", who: "staff", ago: "30m ago", unread: true, icons: ["hidden", "alert"] },
  { title: "New Booking Confirmation", badges: [["booking", "blue"], ["medium", "yellow"]], text: "Booking #BK-2024-001 has been confirmed", who: "staff", ago: "2h ago", unread: false, icons: ["seen"] },
  { title: "Payment Received", badges: [["payment", "purple"], ["low", "gray"], ["New", "blue"]], text: "Payment of $450 received for booking #BK-2024-002", who: "admin", ago: "4h ago", unread: true, icons: ["hidden"] },
];

const TYPE_SUMMARY: [BadgeDef, number, number][] = [
  [["system", "purple"], 45, 8],
  [["booking", "blue"], 38, 6],
  [["maintenance", "red"], 32, 5],
  [["payment", "purple"], 25, 3],
  [["guest", "purple"], 16, 1],
];

function NotificationsCard() {
  return (
    <Card>
      <CardHead icon={Bell} title="Notifications Overview" text="Notification statistics, types, and recent alerts" />
      <div className="flex flex-col gap-6">
        <Stats
          cols="grid-cols-4"
          items={[
            { value: "156", label: "Total Notifications" },
            { value: "23", label: "Unread", tone: "text-blue-600" },
            { value: "5", label: "Urgent", tone: "text-red-600" },
            { value: "85%", label: "Read Rate", tone: "text-green-600" },
          ]}
        />
        <div className="grid grid-cols-2 gap-6">
          <Section title="Notification Types">
            <PieChart w={344} slices={[[45, "system: 45"], [38, "booking: 38"], [32, "maintenance: 32"], [25, "payment: 25"], [16, "guest: 16"]]} />
          </Section>
          <Section title="Priority Distribution">
            <BarPlot
              w={344}
              h={192}
              max={80}
              yTicks={[[0, "0"], [20, "20"], [40, "40"], [60, "60"], [80, "80"]]}
              values={[78, 53, 20, 5]}
              labels={["low", "medium", "high", "urgent"]}
            />
          </Section>
        </div>
        <Section title="Recent Notifications">
          <div className="flex flex-col gap-3">
            {NOTICES.map((n) => (
              <div
                key={n.title}
                className={`flex items-start justify-between rounded-[10px] border border-white/10 p-3 ${n.unread ? "bg-[#1e1e1e]" : ""}`}
              >
                <div>
                  <div className="mb-1 flex items-center gap-2">
                    <span className={`text-neutral-50 ${T.sm}`}>{n.title}</span>
                    {n.badges.map((b) => <Badge key={b[0]} def={b} />)}
                  </div>
                  <p className={`mb-2 text-[#a1a1a1] ${T.sm}`}>{n.text}</p>
                  <div className={`flex gap-4 text-[#a1a1a1] ${T.xs}`}>
                    <span>{n.who}</span>
                    <span>{n.ago}</span>
                  </div>
                </div>
                <div className="flex gap-2">
                  {n.icons.map((k) => <StatusIcon key={k} kind={k} />)}
                </div>
              </div>
            ))}
          </div>
        </Section>
        <Tiles items={[["blue", "23", "Unread Notifications"], ["green", "85%", "Read Rate"], ["red", "5", "Urgent Alerts"]]} />
        <Section title="Notification Types Summary">
          <div className="grid grid-cols-2 gap-3">
            {TYPE_SUMMARY.map(([badge, total, unread]) => (
              <div key={badge[0]} className="flex items-center justify-between rounded-[10px] border border-white/10 p-3">
                <div className="flex h-[22px] items-center gap-2">
                  <Badge def={badge} />
                  <span className={`text-neutral-50 ${T.sm}`}>{total} total</span>
                </div>
                <div className="flex h-[22px] items-center gap-2">
                  <span className={`text-[#a1a1a1] ${T.sm}`}>{unread} unread</span>
                  <div className="h-2 w-16 overflow-hidden rounded-full bg-gray-700">
                    <div className="h-2 rounded-full bg-blue-500" style={{ width: `${(unread / total) * 100}%` }} />
                  </div>
                </div>
              </div>
            ))}
          </div>
        </Section>
      </div>
    </Card>
  );
}

/* ---------- page ---------- */

export default function App() {
  return (
    <div className="flex h-[4293px] w-[1852px] items-start overflow-hidden bg-neutral-950 font-['Open_Sans','Noto_Sans',sans-serif] [zoom:0.9541]">
      <Sidebar />
      <div className="flex-1">
        <Header />
        <main className="flex flex-col gap-6 p-6">
          <div className="flex items-center justify-between">
            <div>
              <h1 className="text-[28.8px] leading-9 font-bold tracking-tight text-neutral-50">Welcome back, Admin!</h1>
              <p className={`text-[#a1a1a1] ${T.base}`}>Here's what's happening at Luxury Stay Hotel today.</p>
            </div>
            <div className="text-right">
              <div className={`text-neutral-50 ${T.sm}`}>Thursday, September 4, 2025</div>
              <div className={`text-[#a1a1a1] ${T.xs}`}>06:33 PM</div>
            </div>
          </div>
          <div className="grid grid-cols-4 gap-6">
            {METRICS.map((m) => <MetricCard key={m.title} m={m} />)}
          </div>
          <div className="grid grid-cols-2 gap-6">
            <RevenueCard />
            <OccupancyCard />
          </div>
          <div className="grid grid-cols-3 gap-6">
            <MaintenanceCard />
            <HousekeepingCard />
            <FeedbackCard />
          </div>
          <div className="grid grid-cols-2 gap-6">
            <ActivityCard />
            <NotificationsCard />
          </div>
        </main>
      </div>
    </div>
  );
}
